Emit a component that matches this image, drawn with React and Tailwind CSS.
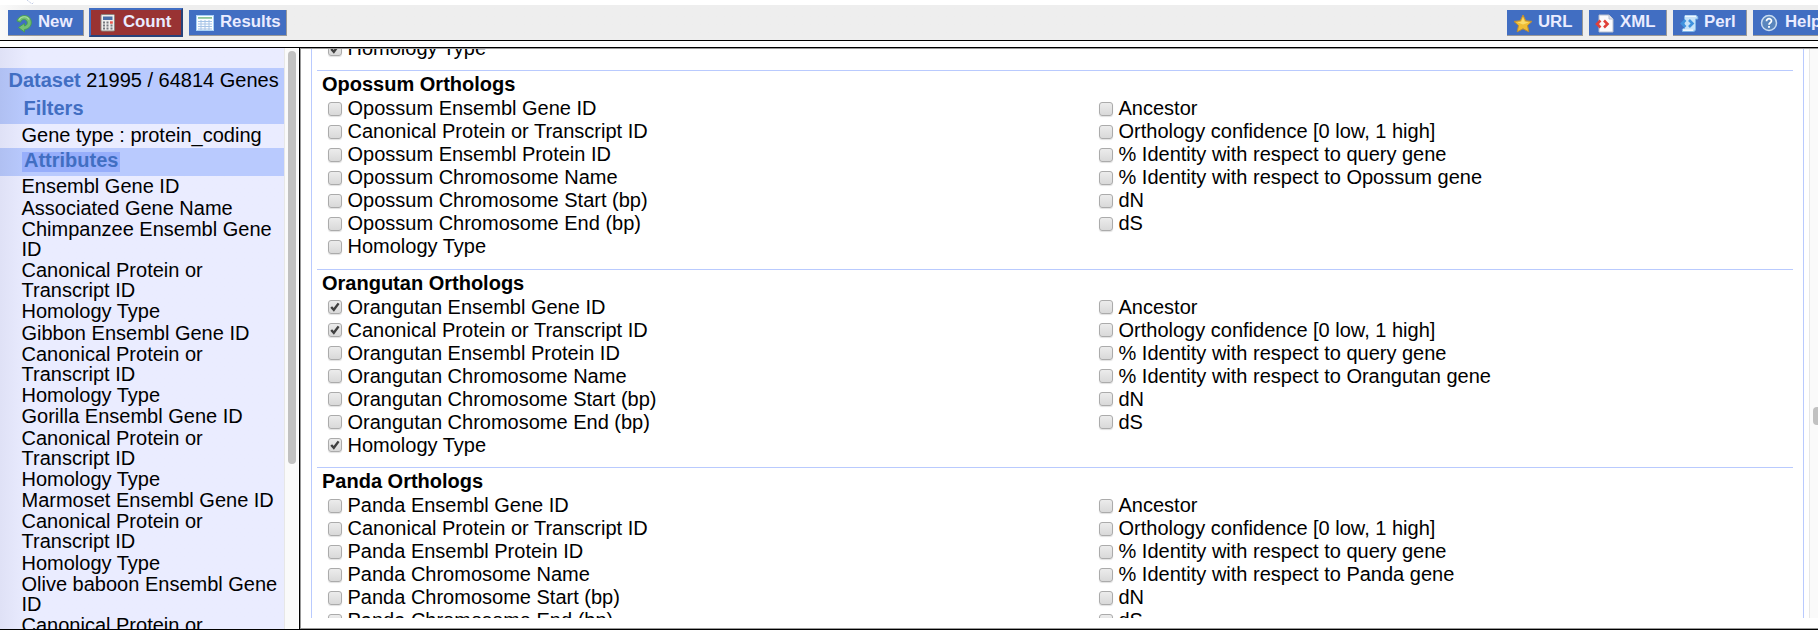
const ATTRIBUTES = [
  'Ensembl Gene ID',
  'Associated Gene Name',
  'Chimpanzee Ensembl Gene ID',
  'Canonical Protein or Transcript ID',
  'Homology Type',
  'Gibbon Ensembl Gene ID',
  'Canonical Protein or Transcript ID',
  'Homology Type',
  'Gorilla Ensembl Gene ID',
  'Canonical Protein or Transcript ID',
  'Homology Type',
  'Marmoset Ensembl Gene ID',
  'Canonical Protein or Transcript ID',
  'Homology Type',
  'Olive baboon Ensembl Gene ID',
  'Canonical Protein or Transcript ID',
];

const SPECIES = [
  { name: 'Opossum', checked: [] },
  { name: 'Orangutan', checked: [0, 1, 6] },
  { name: 'Panda', checked: [] },
];

const leftLabels = (s) => [
  `${s} Ensembl Gene ID`,
  'Canonical Protein or Transcript ID',
  `${s} Ensembl Protein ID`,
  `${s} Chromosome Name`,
  `${s} Chromosome Start (bp)`,
  `${s} Chromosome End (bp)`,
  'Homology Type',
];

const rightLabels = (s) => [
  'Ancestor',
  'Orthology confidence [0 low, 1 high]',
  '% Identity with respect to query gene',
  `% Identity with respect to ${s} gene`,
  'dN',
  'dS',
];

function NewIcon() {
  return (
    <svg width="17" height="19" viewBox="0 0 17 19" className="shrink-0">
      <path d="M1 7 C2.500 1 11.500 -0.500 14.500 5 C17 10.500 13.500 15 8.500 15.500 L8.500 18 L2.500 13.500 L8.500 9.500 L8.500 12 C11 11.800 12 9 10.800 7 C9.200 4.600 5.500 4.800 4.500 8.200 Z" fill="#74bf74" stroke="#45a04e" strokeWidth="0.9" />
      <path d="M3 6 C5 2 11 1.500 13 5.500" fill="none" stroke="#a8dfa2" strokeWidth="1.200" />
    </svg>
  );
}

function CalcIcon() {
  return (
    <svg width="16" height="18" viewBox="0 0 16 18" className="shrink-0">
      <rect x="1" y="0.500" width="13.500" height="16.500" rx="1" fill="#efeeec" stroke="#8d8580" />
      <rect x="3" y="2.500" width="9.500" height="3.500" fill="#4a6fa8" />
      <path d="M3 7.500h2v2h-2zM6.500 7.500h2v2h-2zM3 10.500h2v2h-2zM6.500 10.500h2v2h-2zM10.500 10.500h2v2h-2zM3 13.500h2v2h-2zM6.500 13.500h2v2h-2zM10.500 13.500h2v2h-2z" fill="#77797f" />
      <rect x="10" y="7.300" width="2.800" height="2.400" fill="#e8564b" />
    </svg>
  );
}

function TableIcon() {
  return (
    <svg width="18" height="16" viewBox="0 0 18 16" className="shrink-0">
      <rect x="0.500" y="0.500" width="17" height="15" fill="#fbfdff" stroke="#a9d2f6" />
      <rect x="2" y="2" width="14" height="1.800" fill="#8cc49a" />
      <path d="M2 6.500h14M2 9h14M2 11.500h14M2 14h14M5 5v10M9 5v10M13 5v10" stroke="#a6c3e6" strokeWidth="1" fill="none" />
    </svg>
  );
}

function StarIcon() {
  return (
    <svg width="20" height="19" viewBox="0 0 20 19" className="shrink-0">
      <path d="M10 1 L12.700 6.700 L19 7.400 L14.500 11.500 L15.800 17.800 L10 14.800 L4.200 17.800 L5.500 11.500 L1 7.400 L7.300 6.700 Z" fill="#f0bd35" stroke="#c08e30" strokeWidth="1" strokeLinejoin="round" />
      <path d="M10 3.500 L11.800 7.800 L16 8.300 L10 10.500 L4 8.300 L8.200 7.800 Z" fill="#fadb6a" />
    </svg>
  );
}

function XmlIcon() {
  return (
    <svg width="19" height="19" viewBox="0 0 19 19" className="shrink-0">
      <path d="M4 1 H14 L18 5 V18 H4 Z" fill="#fbfbfd" stroke="#b8bfce" />
      <path d="M14 1 V5 H18" fill="#dfe3ec" stroke="#b8bfce" />
      <path d="M5.500 6.500 L2 10 L5.500 13.500 M9 6.500 L12.500 10 L9 13.500" fill="none" stroke="#e0403a" strokeWidth="2.600" />
    </svg>
  );
}

function PerlIcon() {
  return (
    <svg width="19" height="19" viewBox="0 0 19 19" className="shrink-0">
      <path d="M5 1.500 H16 Q18.500 2 17.800 5 H15.500 V15 Q15.500 17.500 13 17.500 H2.500 Q1.500 15 3.500 14.500 H4.500 V3 Z" fill="#c6e2f8" stroke="#7fb6e8" />
      <path d="M5 2.200 H16" stroke="#f4faff" strokeWidth="1.400" />
      <path d="M3 16.200 H13" stroke="#f4faff" strokeWidth="1.400" />
      <path d="M5.500 6 L2 9.500 L5.500 13 M9 6 L12.500 9.500 L9 13" fill="none" stroke="#3f92de" strokeWidth="2.600" />
    </svg>
  );
}

function HelpIcon() {
  return (
    <svg width="18" height="18" viewBox="0 0 18 18" className="shrink-0">
      <circle cx="9" cy="9" r="7.500" fill="#5a86bd" stroke="#c9dcf0" strokeWidth="1.500" />
      <path d="M6.500 7.200 C6.500 3.800 11.600 4 11.500 7 C11.400 8.800 9 8.800 9 10.800" fill="none" stroke="#fff" strokeWidth="1.700" />
      <rect x="8.100" y="12" width="1.800" height="1.800" fill="#fff" />
    </svg>
  );
}

function ToolButton({ icon, label, className }) {
  return (
    <button className={`flex h-[26px] shrink-0 items-start border-r border-b border-[#999] bg-[#416ec2] text-[16.8px] leading-[20px] font-bold whitespace-nowrap text-[#eaecff] ${className}`}>
      <span className="flex h-[26px] items-center">{icon}</span>
      <span className="mt-[2px]">{label}</span>
    </button>
  );
}

function Check({ on }) {
  return (
    <span className="flex h-[14px] w-[14px] shrink-0 items-center justify-center rounded-[3px] border border-[#ababab] bg-linear-to-b from-[#ececec] to-[#d9d9d9] shadow-[0_1px_1px_rgba(0,0,0,0.12)]">
      {on && (
        <svg width="12" height="12" viewBox="0 0 12 12">
          <path d="M2.200 6 L4.800 8.800 L9.600 2.400" fill="none" stroke="#404040" strokeWidth="2.400" />
        </svg>
      )}
    </span>
  );
}

function Option({ label, on }) {
  return (
    <label className="flex h-[23px] items-center gap-[5.500px] whitespace-nowrap">
      <Check on={on} />
      <span className="leading-[23px]">{label}</span>
    </label>
  );
}

function Section({ name, checked }) {
  return (
    <section className="h-[198.500px] shrink-0 border-t border-[#b9cafe] pt-[2px] pl-[5px]">
      <h2 className="h-[24px] leading-[22px] font-bold">{name} Orthologs</h2>
      <div className="flex pl-[6px]">
        <div className="w-[771px]">
          {leftLabels(name).map((l, i) => (
            <Option key={l} label={l} on={checked.includes(i)} />
          ))}
        </div>
        <div>
          {rightLabels(name).map((l) => (
            <Option key={l} label={l} />
          ))}
        </div>
      </div>
    </section>
  );
}

export default function App() {
  return (
    <div className="flex h-[633px] w-[1818px] flex-col overflow-hidden bg-white font-['Liberation_Sans',Arial,sans-serif] text-[20px] text-black">
      <div className="h-[5px] shrink-0 pl-[26px]">
        <svg width="12" height="5" viewBox="0 0 12 5">
          <path d="M1 0 L6 4 L8 2" fill="none" stroke="#c3cce6" strokeWidth="1" strokeDasharray="2 1" />
        </svg>
      </div>
      <header className="flex h-[36px] shrink-0 items-start justify-between overflow-hidden border-b border-black bg-[#eee] bg-linear-to-r from-[#fafafa] to-[#eee] to-2%">
        <div className="flex items-start">
          <ToolButton icon={<NewIcon />} label="New" className="mt-[5px] ml-[8px] w-[76px] gap-[5px] pl-[8px]" />
          <button className="mt-[3px] ml-[5px] flex h-[29px] w-[94px] items-start gap-[7px] border-2 border-t-[#416ec2] border-r-[#27427a] border-b-[#27427a] border-l-[#416ec2] bg-[#993333] pl-[9px] text-[16.8px] leading-[20px] font-bold text-[#eaecff]">
            <span className="mt-[4px]"><CalcIcon /></span>
            <span className="mt-[2px]">Count</span>
          </button>
          <ToolButton icon={<TableIcon />} label="Results" className="mt-[5px] ml-[6px] w-[98px] gap-[6px] pl-[7px]" />
        </div>
        <div className="flex w-[311px] items-start gap-[6px] overflow-hidden pt-[5px]">
          <ToolButton icon={<StarIcon />} label="URL" className="w-[76px] gap-[5px] pl-[6px]" />
          <ToolButton icon={<XmlIcon />} label="XML" className="w-[78px] gap-[6px] pl-[6px]" />
          <ToolButton icon={<PerlIcon />} label="Perl" className="w-[74px] gap-[5px] pl-[7px]" />
          <ToolButton icon={<HelpIcon />} label="Help" className="w-[76px] gap-[7px] pl-[7px]" />
        </div>
      </header>
      <main className="mt-[6px] flex h-[583px] shrink-0 border-y border-black">
        <aside className="flex w-[299px] shrink-0 overflow-hidden">
          <div className="w-[284px] shrink-0 bg-[#eaecff] bg-linear-to-r from-[#dfe1f6] to-[#eaecff] to-10%">
            <div className="mt-[20px] h-[56px] bg-[#b9cafe] bg-linear-to-r from-[#b0c0f2] to-[#b9cafe] to-10% whitespace-nowrap">
              <div className="h-[28px] pl-[8.500px] leading-[25px]">
                <b className="text-[#416ec2]">Dataset</b> 21995 / 64814 Genes
              </div>
              <div className="h-[28px] pl-[23.500px] leading-[24px] font-bold text-[#416ec2]">Filters</div>
            </div>
            <div className="h-[24px] pl-[21.500px] leading-[22px]">Gene type : protein_coding</div>
            <div className="flex h-[28px] bg-[#b9cafe] bg-linear-to-r from-[#b0c0f2] to-[#b9cafe] to-10% pt-[4px] pl-[22px]">
              <b className="h-[20px] w-[98px] bg-[#97aefb] pl-[2px] leading-[17px] text-[#416ec2]">Attributes</b>
            </div>
            <ul className="flex flex-col gap-[1.270px] pt-[0.300px] pr-[4px] pl-[21.500px] leading-[20px]">
              {ATTRIBUTES.map((a, i) => (
                <li key={i}>{a}</li>
              ))}
            </ul>
          </div>
          <div className="h-full w-[14px] shrink-0 border-l border-[#e7e7e7] bg-[#fafafa] pt-[3px] pl-[3px]">
            <div className="h-[413px] w-[8px] rounded-full bg-[#c1c1c1]" />
          </div>
        </aside>
        <div className="flex min-w-0 flex-1 border-l border-black">
          <div className="flex h-full min-w-0 flex-1 border-y border-l border-[#999] pl-[10px]">
            <div className="h-[569px] w-[1493px] shrink-0 overflow-hidden border-x border-[#b9cafe] pr-[10px] pl-[5px]">
              <div className="flex h-[21px] items-end pl-[11px]">
                <div className="mb-[10px]">
                  <Option label="Homology Type" on />
                </div>
              </div>
              {SPECIES.map((s) => (
                <Section key={s.name} {...s} />
              ))}
            </div>
            <div className="ml-[5px] h-[569px] flex-1 border-l border-[#e7e7e7] bg-[#fafafa] pt-[358px] pl-[3px]">
              <div className="h-[18px] w-[8px] rounded-full bg-[#c1c1c1]" />
            </div>
          </div>
        </div>
      </main>
    </div>
  );
}
